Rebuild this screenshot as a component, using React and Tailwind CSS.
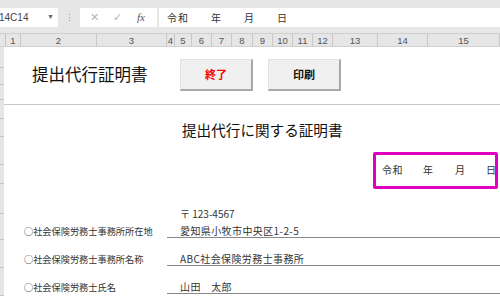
// App.jsx
const jp = { fontFamily: '"Noto Sans CJK JP", "Liberation Sans", sans-serif' };

const columns = [
  { n: "1", w: "w-[15px]" },
  { n: "2", w: "w-[76px]" },
  { n: "3", w: "w-[70px]" },
  { n: "4", w: "w-[8px]" },
  { n: "5", w: "w-[17px]" },
  { n: "6", w: "w-[20px]" },
  { n: "7", w: "w-[20px]" },
  { n: "8", w: "w-[21px]" },
  { n: "9", w: "w-[20px]" },
  { n: "10", w: "w-[20px]" },
  { n: "11", w: "w-[20px]" },
  { n: "12", w: "w-[20px]" },
  { n: "13", w: "w-[45px]" },
  { n: "14", w: "w-[50px]" },
  { n: "15", w: "flex-1" },
];

const rows = [
  { label: "○社会保険労務士事務所所在地", value: "愛知県小牧市中央区1-2-5" },
  { label: "○社会保険労務士事務所名称", value: "ABC社会保険労務士事務所" },
  { label: "○社会保険労務士氏名", value: "山田　太郎" },
];

function FormulaBar() {
  return (
    <div className="bg-[#e6e6e6] pt-[8px] pb-[6px]">
      <div className="flex h-[19px] items-stretch">
        <div className="w-[58px] bg-white flex items-center justify-between pr-[4px] text-[10px] text-[#444]">
          <span className="-ml-[1px]">14C14</span>
          <span className="text-[7px] text-[#666]">▼</span>
        </div>
        <div className="w-[22px] flex items-center justify-center">
          <div className="flex flex-col gap-[2px]">
            <span className="w-[1px] h-[1px] bg-[#999]" />
            <span className="w-[1px] h-[1px] bg-[#999]" />
            <span className="w-[1px] h-[1px] bg-[#999]" />
          </div>
        </div>
        <div className="w-[77px] bg-white flex items-center text-[#b4b4b4]">
          <span className="ml-[10px] text-[11px]">✕</span>
          <span className="ml-[14px] text-[11px]">✓</span>
          <span
            className="ml-[15px] text-[11px] italic text-[#555]"
            style={{ fontFamily: '"Liberation Serif", serif' }}
          >
            fx
          </span>
        </div>
        <div
          className="ml-[2px] flex-1 bg-white flex items-center pl-[8px] text-[10px] text-[#333] tracking-[1px] whitespace-pre"
          style={jp}
        >
          令和　　年　　月　　日
        </div>
      </div>
    </div>
  );
}

function ColumnHeader() {
  return (
    <div className="flex h-[14px] bg-[#e6e6e6] border-t border-[#d0d0d0] border-b border-[#c4c4c4] text-[9.5px] text-[#555] leading-[13px]">
      <div className="w-[6px] border-r border-[#c4c4c4]" />
      {columns.map((c) => (
        <div key={c.n} className={`${c.w} border-r border-[#c8c8c8] text-center`}>
          {c.n}
        </div>
      ))}
    </div>
  );
}

function Button({ children, red }) {
  return (
    <button
      className={`w-[73px] h-[32px] bg-[#f0f0f0] border-t border-l border-[#e2e2e2] border-r-2 border-b-2 border-r-[#a8a8a8] border-b-[#a8a8a8] text-[11px] font-bold ${
        red ? "text-[#ff0000]" : "text-[#111]"
      }`}
      style={jp}
    >
      {children}
    </button>
  );
}

export default function App() {
  return (
    <div className="w-[500px] h-[308px] overflow-hidden bg-white" style={{ fontFamily: '"Liberation Sans", sans-serif' }}>
      <FormulaBar />
      <ColumnHeader />
      <div className="flex">
        <div className="w-[4px] bg-[#e6e6e6] flex flex-col">
          {[21, 17, 15, 19, 18, 28, 19, 30, 26, 28, 28].map((h, i) => (
            <div key={i} className="border-b border-[#c4c4c4]" style={{ height: h }} />
          ))}
        </div>
        <div className="flex-1" style={jp}>
          <div className="h-[58px] flex items-center border-b border-[#c8c8c8]">
            <div className="ml-[28px] w-[148px] text-[16.5px] text-[#111] mt-[-2px]">提出代行証明書</div>
            <div className="flex gap-[15px] mt-[-1px]">
              <Button red>終了</Button>
              <Button>印刷</Button>
            </div>
          </div>
          <div className="mt-[15px] ml-[178px] text-[14.6px] leading-[20px] text-[#111]">
            提出代行に関する証明書
          </div>
          <div className="mt-[12px] ml-[369px] w-[125px] h-[37px] border-[3px] border-[#e000c0] rounded-[2px] flex items-center whitespace-nowrap text-[10px] text-[#333] pb-[3px]">
            <span className="ml-[6px] tracking-[0.5px]">令和</span>
            <span className="ml-[20px]">年</span>
            <span className="ml-[22px]">月</span>
            <span className="ml-[21px]">日</span>
          </div>
          <div className="mt-[19px] h-[12px] leading-[12px] pl-[176px] text-[10px] text-[#333]">〒 123-4567</div>
          <div className="mt-[5px] flex flex-col gap-[15px]">
            {rows.map((r) => (
              <div key={r.label} className="flex">
                <div className="w-[163px] pl-[20px] text-[9.2px] leading-[12px] text-[#333]">{r.label}</div>
                <div className="flex-1 border-b border-[#888] pl-[13px] text-[10px] leading-[12px] text-[#333] tracking-[0.4px] whitespace-pre">
                  {r.value}
                </div>
              </div>
            ))}
          </div>
        </div>
      </div>
    </div>
  );
}
